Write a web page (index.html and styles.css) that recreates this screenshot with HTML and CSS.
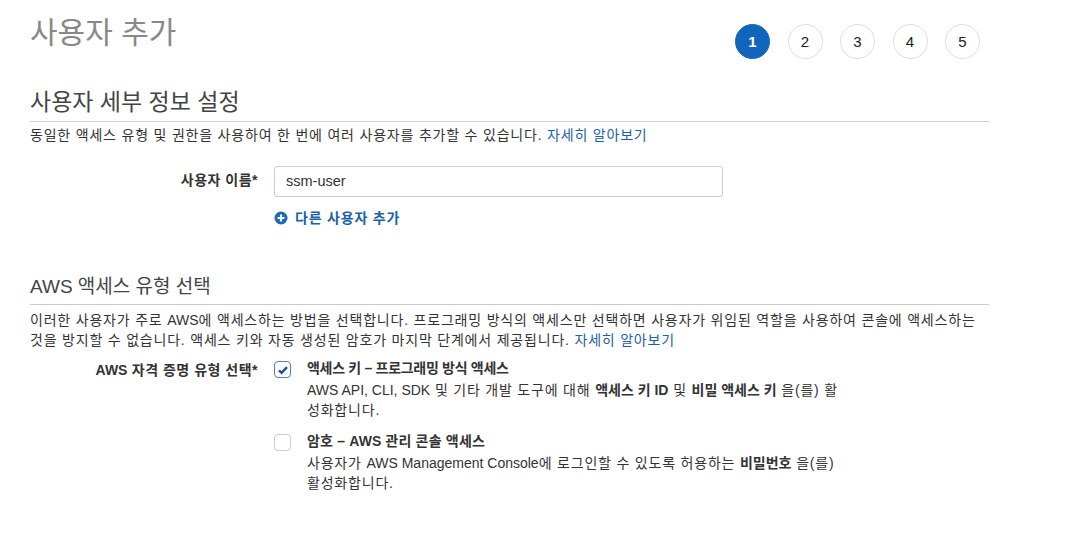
FILE: index.html
```html
<!DOCTYPE html>
<html lang="ko">
<head>
<meta charset="utf-8">
<link rel="stylesheet" href="styles.css">
</head>
<body>
<div class="page">
  <div class="header">
    <h1 class="title">사용자 추가</h1>
    <ol class="steps">
      <li class="step active">1</li>
      <li class="step">2</li>
      <li class="step">3</li>
      <li class="step">4</li>
      <li class="step">5</li>
    </ol>
  </div>

  <section class="section">
    <h2 class="section-title">사용자 세부 정보 설정</h2>
    <p class="desc">동일한 액세스 유형 및 권한을 사용하여 한 번에 여러 사용자를 추가할 수 있습니다. <a class="link">자세히 알아보기</a></p>
    <div class="form-row">
      <label class="label">사용자 이름*</label>
      <div class="control">
        <div class="input">ssm-user</div>
        <a class="add-link">
          <svg class="plus" viewBox="0 0 14 14" width="14" height="14"><circle cx="7" cy="7" r="6.5" fill="#1a6cb5"/><path d="M7 3.6v6.8M3.6 7h6.8" stroke="#fff" stroke-width="2.2"/></svg>
          다른 사용자 추가
        </a>
      </div>
    </div>
  </section>

  <section class="section second">
    <h2 class="section-title small">AWS 액세스 유형 선택</h2>
    <p class="desc">이러한 사용자가 주로 <span class="en">AWS</span>에 액세스하는 방법을 선택합니다. 프로그래밍 방식의 액세스만 선택하면 사용자가 위임된 역할을 사용하여 콘솔에 액세스하는 것을 방지할 수 없습니다. 액세스 키와 자동 생성된 암호가 마지막 단계에서 제공됩니다. <a class="link">자세히 알아보기</a></p>
    <div class="form-row options-row">
      <label class="label"><span class="en">AWS</span> 자격 증명 유형 선택*</label>
      <div class="control options">
        <div class="option">
          <span class="checkbox checked">
            <svg viewBox="0 0 12 12" width="12" height="12"><path d="M2 6.3l2.6 2.6L10 3.2" fill="none" stroke="#1f4f8f" stroke-width="2.4"/></svg>
          </span>
          <div class="option-text">
            <div class="option-title tight">액세스 키 – 프로그래밍 방식 액세스</div>
            <div class="option-desc"><span class="en">AWS API, CLI, SDK</span> 및 기타 개발 도구에 대해 <b>액세스 키 <span class="en">ID</span></b> 및 <b>비밀 액세스 키</b> 을(를) 활성화합니다.</div>
          </div>
        </div>
        <div class="option">
          <span class="checkbox"></span>
          <div class="option-text">
            <div class="option-title">암호 – <span class="en">AWS</span> 관리 콘솔 액세스</div>
            <div class="option-desc">사용자가 <span class="en">AWS Management Console</span>에 로그인할 수 있도록 허용하는 <b>비밀번호</b> 을(를) 활성화합니다.</div>
          </div>
        </div>
      </div>
    </div>
  </section>
</div>
</body>
</html>
```

FILE: styles.css
```css
* { box-sizing: border-box; }
body {
  margin: 0;
  background: #fff;
  font-family: "Liberation Sans", Arial, "Noto Sans CJK KR", sans-serif;
  color: #333;
  font-size: 14px;
}
.page {
  width: 989px;
  padding: 0 0 0 30px;
}
.header {
  display: flex;
  justify-content: space-between;
  align-items: flex-start;
}
.title {
  margin: 14px 0 0;
  font-size: 30px;
  font-weight: 400;
  color: #888;
  line-height: 38px;
}
.steps {
  list-style: none;
  margin: 24px 9px 0 0;
  padding: 0;
  display: flex;
  gap: 17.5px;
}
.step {
  width: 35px;
  height: 35px;
  border-radius: 50%;
  border: 1px solid #ddd;
  display: flex;
  align-items: center;
  justify-content: center;
  font-size: 15px;
  color: #222;
}
.step.active {
  background: #1166bb;
  border-color: #1166bb;
  color: #fff;
  font-weight: 700;
}
.section { margin-top: 28px; }
.section.second { margin-top: 47px; }
.section-title {
  margin: 0;
  font-size: 23px;
  font-weight: 400;
  color: #444;
  line-height: 30px;
  padding-bottom: 4px;
  border-bottom: 1px solid #ccc;
}
.section-title.small {
  font-size: 19px;
  line-height: 26px;
}
.desc {
  margin: 3px 0 0;
  line-height: 20px;
  color: #333;
  letter-spacing: 0.8px;
}
.second .desc { margin-top: 5px; }
.en { letter-spacing: 0; }
.link { color: #1a62a8; }
.form-row {
  display: flex;
  margin-top: 21px;
}
.label {
  width: 244px;
  flex: none;
  text-align: right;
  font-weight: 700;
  padding-top: 6px;
  padding-right: 16px;
  line-height: 16px;
  letter-spacing: 0.5px;
}
.control { width: 449px; }
.input {
  height: 31px;
  border: 1px solid #ccc;
  border-radius: 3px;
  padding: 0 11px;
  line-height: 29px;
  font-size: 14.5px;
  color: #333;
}
.add-link {
  display: flex;
  align-items: center;
  gap: 7px;
  margin-top: 12px;
  color: #1a62a8;
  font-weight: 700;
  line-height: 18px;
  letter-spacing: 0.8px;
}
.plus { flex: none; }
.options-row { margin-top: 8px; }
.options-row .label { padding-top: 4px; }
.options { width: 600px; }
.option {
  display: flex;
  gap: 16px;
  margin-bottom: 11px;
}
.checkbox {
  flex: none;
  width: 17px;
  height: 17px;
  border: 1px solid #ccc;
  border-radius: 4px;
  margin-top: 3px;
  display: flex;
  align-items: center;
  justify-content: center;
}
.checkbox.checked {
  border-color: #4f7fc0;
}
.option-title {
  font-weight: 700;
  line-height: 20px;
  letter-spacing: 0.2px;
}
.option-title.tight { letter-spacing: -0.3px; }
.option-desc {
  width: 540px;
  line-height: 20px;
  margin-top: 2px;
  letter-spacing: 0.8px;
}
.option-desc b { letter-spacing: 0; }
```
